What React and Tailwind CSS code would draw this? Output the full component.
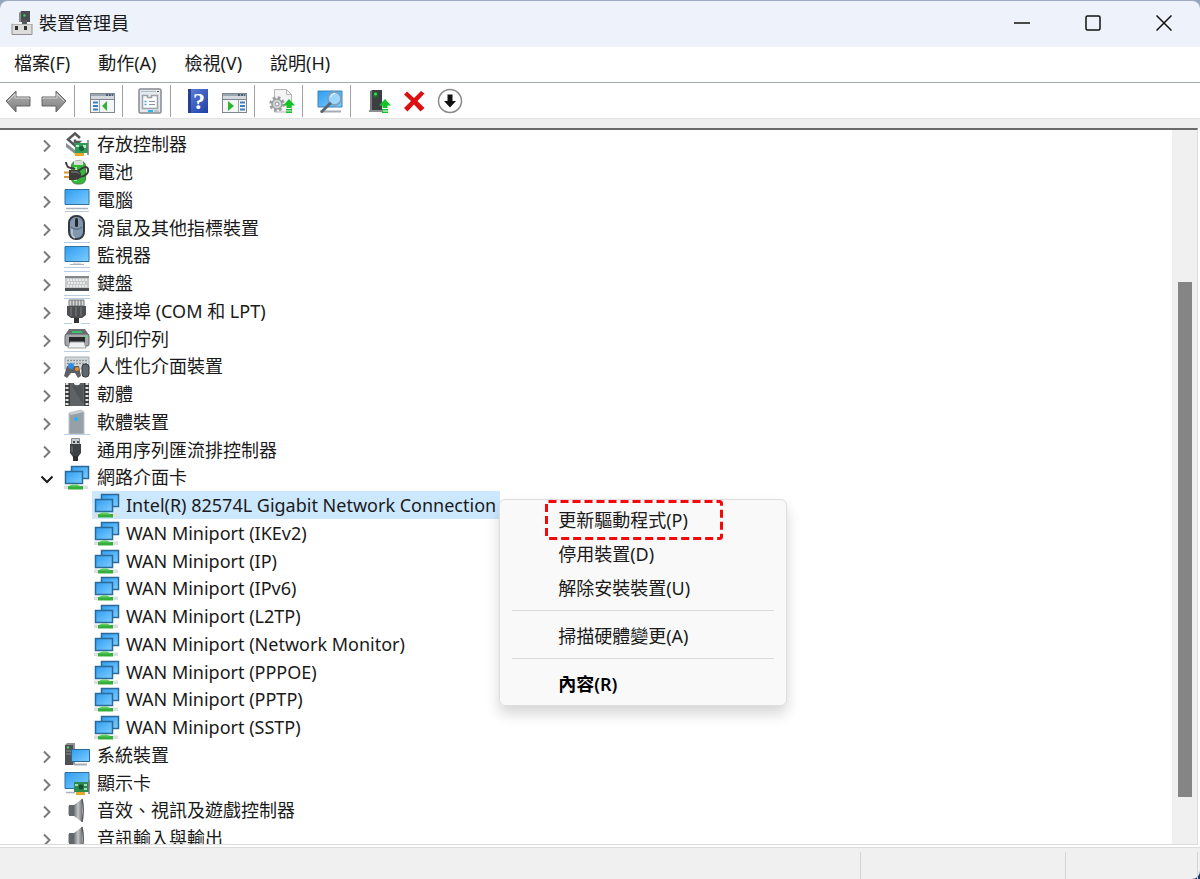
const Defs = () => (
  <svg className="absolute h-0 w-0" aria-hidden="true">
    <defs>
      <linearGradient id="screen" x1="0" y1="0" x2="1" y2="1">
        <stop offset="0" stopColor="#2e9df0" />
        <stop offset="1" stopColor="#7fcdff" />
      </linearGradient>
      <linearGradient id="metal" x1="0" y1="0" x2="1" y2="0">
        <stop offset="0" stopColor="#6f7276" />
        <stop offset="0.5" stopColor="#c4c7ca" />
        <stop offset="1" stopColor="#77797c" />
      </linearGradient>
      <linearGradient id="arrow" x1="0" y1="0" x2="0" y2="1">
        <stop offset="0" stopColor="#b4b4b4" />
        <stop offset="1" stopColor="#7c7c7c" />
      </linearGradient>
      <linearGradient id="help" x1="0" y1="0" x2="1" y2="1">
        <stop offset="0" stopColor="#5f80dc" />
        <stop offset="1" stopColor="#1f3fa4" />
      </linearGradient>
    </defs>
  </svg>
);

const Icon = ({ children }) => (
  <svg viewBox="0 0 26 26" className="h-[26px] w-[26px] shrink-0" aria-hidden="true">
    {children}
  </svg>
);

const AppIcon = () => (
  <Icon>
    <path d="M11 1h9v14h-9z" fill="#4a4d50" />
    <path d="M9 3l2-2v14H9z" fill="#8a8d90" />
    <circle cx="14.500" cy="5.500" r="1.300" fill="#35d04a" />
    <path d="M2 14h20v10.500H2z" fill="#dcdcda" stroke="#8f8f8f" />
    <path d="M2 14l2-2h18v2z" fill="#f2f2f2" />
    <path d="M5 16h3v4H5zM14 16h3v4h-3z" fill="#303030" />
    <path d="M12 10h5v4h-5z" fill="#55585b" />
  </Icon>
);

const BackIcon = () => (
  <Icon>
    <path d="M1 13L11 3v6h14v9H11v6z" fill="url(#arrow)" stroke="#666" strokeLinejoin="round" />
    <path d="M3 13l7-7v4h14v1" fill="none" stroke="#d5d5d5" />
  </Icon>
);

const ForwardIcon = () => (
  <Icon>
    <path d="M25 13L15 3v6H1v9h14v6z" fill="url(#arrow)" stroke="#666" strokeLinejoin="round" />
    <path d="M2 11V10h14V6l7 7" fill="none" stroke="#d5d5d5" />
  </Icon>
);

const WindowFrame = () => (
  <>
    <rect x="1.500" y="5.500" width="24" height="19" fill="#f5f6f7" stroke="#7f868c" />
    <path d="M2 6h23v2H2z" fill="#9aa7b3" />
    <path d="M17 6h2v2h-2zM20 6h2v2h-2zM23 6h1v2h-1z" fill="#4b6076" />
    <path d="M2 8h23v3H2z" fill="#d3d9de" />
    <path d="M2 11.500h23" stroke="#7f868c" />
  </>
);

const ShowTreeIcon = () => (
  <Icon>
    <WindowFrame />
    <path d="M10.500 12v12" stroke="#9aa1a7" />
    <path d="M4 13.500h5v2H4zM4 17h5v2H4zM4 20.500h5v2H4z" fill="#3b7fc4" />
    <path d="M13 18l5-5v10z" fill="#2fb52f" />
  </Icon>
);

const ActionPaneIcon = () => (
  <Icon>
    <WindowFrame />
    <path d="M17.500 12v12" stroke="#9aa1a7" />
    <path d="M19 13.500h5v2h-5zM19 17h5v2h-5zM19 20.500h5v2h-5z" fill="#3b7fc4" />
    <path d="M13 18l-6-5v10z" fill="#2fb52f" />
  </Icon>
);

const PropertiesIcon = () => (
  <Icon>
    <rect x="2" y="1" width="22" height="24" rx="1.500" fill="#e6e9eb" stroke="#858b90" strokeWidth="1.500" />
    <path d="M4 3.500h15" stroke="#a9bccb" />
    <path d="M20 3h2v1h-2z" fill="#555" />
    <path d="M5.500 20.500V7.500h5v2h4v-2h6v13z" fill="#fbfcfc" stroke="#9aa3aa" strokeWidth="1.500" />
    <path d="M12 13.500h6M12 16.500h6" stroke="#8c959c" />
    <path d="M7.500 13.500h2M7.500 16.500h2" stroke="#4aa3dc" strokeWidth="1.500" />
    <path d="M11 22h5v2h-5z" fill="#2fb6ee" />
    <path d="M17 22h5v2h-5z" fill="#bfc5c9" />
  </Icon>
);

const HelpIcon = () => (
  <Icon>
    <path d="M3 1h20v24H3z" fill="url(#help)" />
    <path d="M3 1h3v24H3z" fill="#24408f" />
    <text x="14" y="21" textAnchor="middle" fontSize="24" fontWeight="bold" fontFamily="Liberation Serif, serif" fill="#fff">?</text>
  </Icon>
);

const GreenUp = () => (
  <>
    <path d="M20 11l6 6.500h-3.500V20h-5v-2.500H14z" fill="#14c32a" />
    <path d="M17 21h6v1.500h-6zM17 23.500h6V25h-6z" fill="#14c32a" />
  </>
);

const UpdateIcon = () => (
  <Icon>
    <path d="M5.500 24V1.500h12l5 5V24z" fill="#f4f4f4" stroke="#b5b5b5" />
    <path d="M17.500 1.500v5h5" fill="none" stroke="#b5b5b5" />
    <circle cx="8" cy="16" r="5" fill="#d6d8d9" stroke="#9a9da0" strokeWidth="1.500" />
    <circle cx="8" cy="16" r="6.500" fill="none" stroke="#9a9da0" strokeWidth="2.500" strokeDasharray="2.700 2.400" />
    <circle cx="8" cy="16" r="2" fill="#fff" stroke="#8e9295" />
    <GreenUp />
  </Icon>
);

const ScanIcon = () => (
  <Icon>
    <path d="M1 3h24v16H1z" fill="url(#screen)" stroke="#3c83b9" />
    <path d="M3 23.500h21" stroke="#a6adb3" strokeWidth="2" />
    <circle cx="17.500" cy="10.500" r="6.500" fill="#a8dbfb" fillOpacity="0.85" stroke="#7b9bb3" strokeWidth="1.500" />
    <path d="M13 15.500L5 23.500" stroke="#5c6770" strokeWidth="3" strokeLinecap="round" />
    <path d="M14 9c0-2 2-3.500 4-3.500" stroke="#fff" fill="none" />
  </Icon>
);

const EnableIcon = () => (
  <Icon>
    <path d="M7 2h10v20H7z" fill="#3c3f42" />
    <path d="M5 3l2-1v20H5z" fill="#777b7e" />
    <path d="M8 4h5v6H8z" fill="#275f35" />
    <circle cx="10.500" cy="6" r="1.500" fill="#2ee652" />
    <path d="M4 22h14v2H4z" fill="#8c8f91" />
    <GreenUp />
  </Icon>
);

const RemoveIcon = () => (
  <Icon>
    <path d="M6 3.500l7 6.500 7-7 3.500 2.500-7 7.500 7 7-4 3.500-6.500-7-6.500 7L3 20l7-7-7-6.500z" fill="#dc1010" />
  </Icon>
);

const DisableIcon = () => (
  <Icon>
    <circle cx="13" cy="13" r="11.500" fill="#fff" stroke="#8a8a8a" strokeWidth="1.500" />
    <path d="M10.500 6.500h5V13H19l-6 6.500L7 13h3.500z" fill="#111" />
  </Icon>
);

const StorageIcon = () => (
  <Icon>
    <path d="M16 7l-5-4.500-7 6 7 6 4-3.500h-4V8.500" fill="none" stroke="#55585a" strokeWidth="2.500" />
    <path d="M2 12l9 7v4l-9-7z" fill="#8c8f91" />
    <path d="M11 12h13v10H11z" fill="#2e9b56" />
    <path d="M12 14h3v2h-3zM19 14h3v3h-3z" fill="#bce8c8" />
    <circle cx="17.500" cy="17.500" r="2.500" fill="#17603a" />
    <path d="M24 9v15" stroke="#777" strokeWidth="1.500" />
    <path d="M11 22h9v3h-9z" fill="#e9a72a" />
  </Icon>
);

const BatteryIcon = () => (
  <Icon>
    <rect x="7.500" y="2" width="14" height="23" rx="5" fill="#35b83a" stroke="#4f7a4f" />
    <path d="M10 2h9v4h-9z" fill="#d8dddb" />
    <path d="M10 8h3v14h-3z" fill="#a9f09d" />
    <path d="M2 3c1 8 5 5 9 7M14 12c4-3 9-6 10-2s-3 8-9 8" fill="none" stroke="#3a3a3a" strokeWidth="2" />
    <path d="M5 11h6c4 0 6 2 6 4.500S15 21 11 21H5z" fill="#3b3b3b" />
    <path d="M7 13h5c2 0 3 1 3 2" fill="none" stroke="#858585" />
    <path d="M0 13.500h5M0 18h5" stroke="#d39a3b" strokeWidth="2" />
  </Icon>
);

const MonitorIcon = () => (
  <Icon>
    <path d="M1 4.500h24v15H1z" fill="url(#screen)" stroke="#31719f" />
    <path d="M9 20.500h8v2H9z" fill="#d5dade" />
    <path d="M6 22.500h14" stroke="#a9b2ba" />
    <path d="M0 0.500h26M0 25.500h26" stroke="#b9cde6" />
  </Icon>
);

const ComputerIcon = () => (
  <Icon>
    <path d="M1 2.500h24v15H1z" fill="url(#screen)" stroke="#31719f" />
    <path d="M2 21.500h22" stroke="#aab2b9" strokeWidth="1.500" />
    <path d="M1 24.500h24" stroke="#b9c9de" />
  </Icon>
);

const MouseIcon = () => (
  <Icon>
    <rect x="5" y="1" width="15" height="23" rx="7" fill="#8197ad" stroke="#333b42" strokeWidth="2" />
    <path d="M7 12c3 3 8 3 11 0" fill="none" stroke="#4f5e6c" />
    <rect x="11" y="3" width="3" height="9" rx="1.500" fill="#23282c" />
    <path d="M8 14v5c0 2 1 3 3 4" fill="none" stroke="#b9cadb" strokeWidth="1.500" />
  </Icon>
);

const KeyboardIcon = () => (
  <Icon>
    <path d="M1 6h24v15H1z" fill="#c6c8ca" />
    <path d="M1 6h24v2H1z" fill="#83878a" />
    <path d="M1 18h24v3H1z" fill="#4c4f52" />
    <path d="M3 10h20M4 13h18M3 16h20" stroke="#f4f4f4" strokeWidth="1.500" strokeDasharray="2 1" />
    <path d="M0 1.500h26M0 25.500h26" stroke="#b9cde6" />
  </Icon>
);

const PortIcon = () => (
  <Icon>
    <path d="M5 2h15v6H5z" fill="#d3d5d6" stroke="#77797b" />
    <path d="M8 2v6M11 2v6M14 2v6M17 2v6" stroke="#6d6f71" />
    <path d="M3 8h19v9l-4 3H7l-4-3z" fill="#4c4e50" />
    <path d="M7 9v9M12 9v9M17 9v9" stroke="#7f8284" />
    <path d="M10 20h5v5h-5z" fill="#333" />
    <path d="M0 0.500h26M0 25.500h8M17 25.500h9" stroke="#b9cde6" />
  </Icon>
);

const PrinterIcon = () => (
  <Icon>
    <path d="M5 3h16l4 6H1z" fill="#6a6e71" />
    <path d="M8 5h10v2H8z" fill="#36c26d" />
    <rect x="1" y="8" width="24" height="12" rx="2" fill="#a4a8ab" stroke="#63676a" />
    <path d="M5 11h16v6H5z" fill="#26282a" />
    <path d="M6 16h14l2 6H4z" fill="#eef1f3" stroke="#9ba0a3" />
    <circle cx="22" cy="10.500" r="1" fill="#3af05a" />
    <path d="M0 25.500h26" stroke="#b9cde6" />
  </Icon>
);

const HidIcon = () => (
  <Icon>
    <path d="M1 4h24v12H1z" fill="#d5d8da" stroke="#a5abb0" />
    <path d="M3 7.500h20M3 10.500h20" stroke="#8f969b" strokeWidth="1.500" strokeDasharray="2 1" />
    <path d="M3 13h12l2 10-3 2-3-5H7l-4 5-3-2z" fill="#5c6063" />
    <circle cx="7" cy="13" r="3" fill="#2d8de2" />
    <circle cx="13" cy="16" r="2" fill="#e48a2c" />
    <rect x="18" y="11" width="7" height="13" rx="3" fill="#5f676e" stroke="#34393d" />
  </Icon>
);

const FirmwareIcon = () => (
  <Icon>
    <path d="M1 2h24v23H1z" fill="#3a3c3e" />
    <path d="M3 2v23M23 2v23" stroke="#e2e2e2" strokeWidth="3" strokeDasharray="2 2" />
    <path d="M6 2h14v23H6z" fill="#606366" />
    <path d="M7 4l12 19V4z" fill="#515457" />
    <path d="M10 1h6v1c0 3-6 3-6 0z" fill="#f5f5f5" />
  </Icon>
);

const SoftwareIcon = () => (
  <Icon>
    <path d="M5 4l12-3 3 2v22H5z" fill="#98a0a7" stroke="#bcc3c9" />
    <path d="M5 4l12-3 3 2-13 3z" fill="#c8cdd1" />
    <circle cx="12" cy="10" r="2" fill="#27b4f2" />
    <path d="M0 25.500h26" stroke="#b9cde6" />
  </Icon>
);

const UsbIcon = () => (
  <Icon>
    <path d="M7.500 1.500h8v7h-8z" fill="#c9cccd" stroke="#8a8d8f" />
    <path d="M9 4h2v2H9zM13 4h2v2h-2z" fill="#46494b" />
    <path d="M6 7h11v9l-3 4H9l-3-4z" fill="#3f4244" />
    <path d="M9 19h5v5H9z" fill="#2d2f31" />
    <path d="M8 9v6" stroke="#777b7e" />
  </Icon>
);

const NetworkIcon = () => (
  <Icon>
    <path d="M7.500 2.500h17v12h-17z" fill="url(#screen)" stroke="#2b6a98" strokeWidth="1.500" />
    <path d="M1.500 7.500h17v12h-17z" fill="url(#screen)" stroke="#2b6a98" strokeWidth="1.500" />
    <path d="M0 21.500h24v3.500H0z" fill="#dcdfe0" />
    <path d="M4 22h15v3.500H4z" fill="#36ae3d" />
    <path d="M8 20.500h5l4 2H4z" fill="#61cf5d" />
  </Icon>
);

const SystemIcon = () => (
  <Icon>
    <path d="M1 3h8v20H1z" fill="#4d5154" />
    <path d="M1 3l2-2h8v21l-2 1V3z" fill="#8b9093" />
    <path d="M2 9h6M2 12h6" stroke="#8b9093" />
    <circle cx="4" cy="5.500" r="1.200" fill="#37dd52" />
    <path d="M7.500 7.500h18v12h-18z" fill="url(#screen)" stroke="#2b6a98" />
    <path d="M10 22.500h13" stroke="#a5adb3" strokeWidth="2" />
  </Icon>
);

const DisplayIcon = () => (
  <Icon>
    <path d="M1 2.500h24v16H1z" fill="url(#screen)" stroke="#31719f" />
    <path d="M2 22.500h9" stroke="#a9b2ba" strokeWidth="1.500" />
    <path d="M10 12h15v10H10z" fill="#2c8b4f" />
    <path d="M11 14h3v2h-3zM20 14h3v2h-3zM20 18h3v2h-3z" fill="#a4d9b2" />
    <circle cx="17" cy="17" r="2.500" fill="#164e2e" />
    <path d="M25 10v14" stroke="#7b7f82" strokeWidth="1.500" />
    <path d="M12 22h9v3h-9z" fill="#e9a72a" />
  </Icon>
);

const SpeakerIcon = () => (
  <Icon>
    <path d="M5 8h5v11H5z" fill="#62676b" />
    <path d="M10 8l8-6v23l-8-6z" fill="url(#metal)" />
    <path d="M18 2c1.500 7 1.500 16 0 23" fill="none" stroke="#55595c" strokeWidth="1.500" />
    <path d="M4 9h1v9H4z" fill="#b9bdc0" />
  </Icon>
);

const toolGroups = [
  [
    { label: "上一頁", icon: BackIcon },
    { label: "下一頁", icon: ForwardIcon },
  ],
  [{ label: "顯示/隱藏主控台樹狀目錄", icon: ShowTreeIcon }],
  [{ label: "內容", icon: PropertiesIcon }],
  [
    { label: "說明", icon: HelpIcon },
    { label: "顯示/隱藏執行窗格", icon: ActionPaneIcon },
  ],
  [{ label: "更新驅動程式", icon: UpdateIcon }],
  [{ label: "掃描硬體變更", icon: ScanIcon }],
  [
    { label: "啟用裝置", icon: EnableIcon },
    { label: "解除安裝裝置", icon: RemoveIcon },
    { label: "停用裝置", icon: DisableIcon },
  ],
];

const rows = [
  { name: "存放控制器", icon: StorageIcon },
  { name: "電池", icon: BatteryIcon },
  { name: "電腦", icon: ComputerIcon },
  { name: "滑鼠及其他指標裝置", icon: MouseIcon },
  { name: "監視器", icon: MonitorIcon },
  { name: "鍵盤", icon: KeyboardIcon },
  { name: "連接埠 (COM 和 LPT)", icon: PortIcon },
  { name: "列印佇列", icon: PrinterIcon },
  { name: "人性化介面裝置", icon: HidIcon },
  { name: "韌體", icon: FirmwareIcon },
  { name: "軟體裝置", icon: SoftwareIcon },
  { name: "通用序列匯流排控制器", icon: UsbIcon },
  { name: "網路介面卡", icon: NetworkIcon, open: true },
  { name: "Intel(R) 82574L Gigabit Network Connection", child: true, selected: true },
  { name: "WAN Miniport (IKEv2)", child: true },
  { name: "WAN Miniport (IP)", child: true },
  { name: "WAN Miniport (IPv6)", child: true },
  { name: "WAN Miniport (L2TP)", child: true },
  { name: "WAN Miniport (Network Monitor)", child: true },
  { name: "WAN Miniport (PPPOE)", child: true },
  { name: "WAN Miniport (PPTP)", child: true },
  { name: "WAN Miniport (SSTP)", child: true },
  { name: "系統裝置", icon: SystemIcon },
  { name: "顯示卡", icon: DisplayIcon },
  { name: "音效、視訊及遊戲控制器", icon: SpeakerIcon },
  { name: "音訊輸入與輸出", icon: SpeakerIcon },
];

const MenuItem = ({ children, bold }) => (
  <button
    role="menuitem"
    className={`block h-[34px] w-full pl-[58px] text-left ${bold ? "font-semibold text-black" : ""}`}
  >
    {children}
  </button>
);

const ContextMenu = () => (
  <div
    role="menu"
    className="absolute top-2 left-full z-10 -ml-px w-72 rounded-md border border-[#dedede] bg-[#f9f9f9] pt-[3px] pb-1 shadow-[0_8px_14px_rgba(0,0,0,0.16)]"
  >
    <MenuItem>更新驅動程式(P)</MenuItem>
    <MenuItem>停用裝置(D)</MenuItem>
    <MenuItem>解除安裝裝置(U)</MenuItem>
    <hr className="mx-3 mt-[5px] mb-2 border-[#dcdcdc]" />
    <MenuItem>掃描硬體變更(A)</MenuItem>
    <hr className="mx-3 mt-[5px] mb-2 border-[#dcdcdc]" />
    <MenuItem bold>內容(R)</MenuItem>
    <svg className="pointer-events-none absolute top-0 left-[45px] h-10 w-[178px]" aria-hidden="true">
      <rect x="1.500" y="1.500" width="175" height="37" rx="2" fill="none" stroke="#f50808" strokeWidth="3" strokeDasharray="8 4" />
    </svg>
  </div>
);

const Chevron = ({ open }) => (
  <button aria-label={open ? "摺疊" : "展開"} className="mt-1 w-3 shrink-0">
    <svg viewBox="0 0 12 14" className="h-3.5 w-3" fill="none" strokeWidth="2">
      {open ? (
        <path d="M0.500 4.500L6 10l5.500-5.500" stroke="#1c1c1c" />
      ) : (
        <path d="M3 1.500L8.500 7 3 12.500" stroke="#7b7b7b" />
      )}
    </svg>
  </button>
);

const TreeRow = ({ row }) => {
  if (row.child) {
    return (
      <li role="treeitem" aria-selected={!!row.selected} className="flex h-7 pl-[92px] nth-[4n]:h-[27px]">
        <div
          className={`relative flex items-center gap-1.5 pr-1 pl-0.5 ${row.selected ? "bg-[#cce8ff]" : ""}`}
        >
          <NetworkIcon />
          <span>{row.name}</span>
          {row.selected && <ContextMenu />}
        </div>
      </li>
    );
  }
  const RowIcon = row.icon;
  return (
    <li role="treeitem" aria-expanded={!!row.open} className="flex h-7 items-center pl-[41px] nth-[4n]:h-[27px]">
      <Chevron open={row.open} />
      <span className="ml-[11px] flex items-center gap-[7px]">
        <RowIcon />
        <span>{row.name}</span>
      </span>
    </li>
  );
};

const Scrollbar = () => (
  <div className="flex w-[25px] shrink-0 flex-col items-center bg-[#f0f0f0]" aria-hidden="true">
    <div className="grow-[152] basis-0" />
    <div className="w-3.5 grow-[515] basis-0 bg-[#858585]" />
    <div className="grow-[47] basis-0" />
  </div>
);

const TitleBar = () => (
  <div className="shrink-0 bg-[#8fa6bd]">
    <header className="flex h-[47px] items-center rounded-t-lg border-t border-[#9cabbd] bg-[#eef3fb] pr-px pb-[3px] pl-2.5">
      <AppIcon />
      <h1 className="ml-[3px] flex-1">裝置管理員</h1>
      <button aria-label="最小化" className="flex h-full w-[71px] items-center justify-center">
        <svg viewBox="0 0 16 16" className="h-4 w-4" fill="none" stroke="#111" strokeWidth="1.500">
          <path d="M0 8h16" />
        </svg>
      </button>
      <button aria-label="最大化" className="flex h-full w-[71px] items-center justify-center">
        <svg viewBox="0 0 16 16" className="h-4 w-4" fill="none" stroke="#111" strokeWidth="1.500">
          <rect x="1" y="1" width="14" height="14" rx="1.500" />
        </svg>
      </button>
      <button aria-label="關閉" className="flex h-full w-[71px] items-center justify-center">
        <svg viewBox="0 0 16 16" className="h-4 w-4" fill="none" stroke="#111" strokeWidth="1.500">
          <path d="M0.500 0.500l15 15M15.500 0.500l-15 15" />
        </svg>
      </button>
    </header>
  </div>
);

const App = () => {
  return (
    <div className="flex h-screen flex-col bg-white font-['Noto_Sans','Noto_Sans_CJK_TC',sans-serif] text-lg leading-6 text-[#1a1a1a]">
      <Defs />
      <TitleBar />

      <nav className="flex h-[35px] shrink-0 items-center gap-7 pb-[3px] pl-3.5">
        <button>檔案(F)</button>
        <button>動作(A)</button>
        <button>檢視(V)</button>
        <button>說明(H)</button>
      </nav>

      <div
        role="toolbar"
        className="flex h-9 shrink-0 items-center divide-x divide-[#a0a0a0] border-t border-[#a5acac]"
      >
        {toolGroups.map((group, i) => (
          <div key={i} className="flex h-8 items-center gap-2.5 pr-[7px] pl-3.5 first:pl-[5px]">
            {group.map(({ label, icon: ToolIcon }) => (
              <button key={label} aria-label={label}>
                <ToolIcon />
              </button>
            ))}
          </div>
        ))}
      </div>

      <div className="h-2.5 shrink-0 border-t border-[#e2e2e2] bg-[#efefef]" />

      <main className="mr-0.5 flex min-h-0 flex-1 overflow-hidden border-t-2 border-r border-b border-[#dcdcdc] border-t-[#6b6b6b]">
        <ul role="tree" className="min-w-0 flex-1">
          {rows.map((row) => (
            <TreeRow key={row.name} row={row} />
          ))}
        </ul>
        <Scrollbar />
      </main>

      <div className="mt-0.5 shrink-0 bg-[#1d3a6b]">
        <footer className="flex h-8 justify-end rounded-br-lg border-t border-[#dcdcdc] bg-[#f0f0f0] pt-1 pr-0.5">
          <div className="w-[205px] border-l border-[#d5d5d5]" />
          <div className="w-[133px] border-x border-[#d5d5d5]" />
        </footer>
      </div>
    </div>
  );
};

export default App;
